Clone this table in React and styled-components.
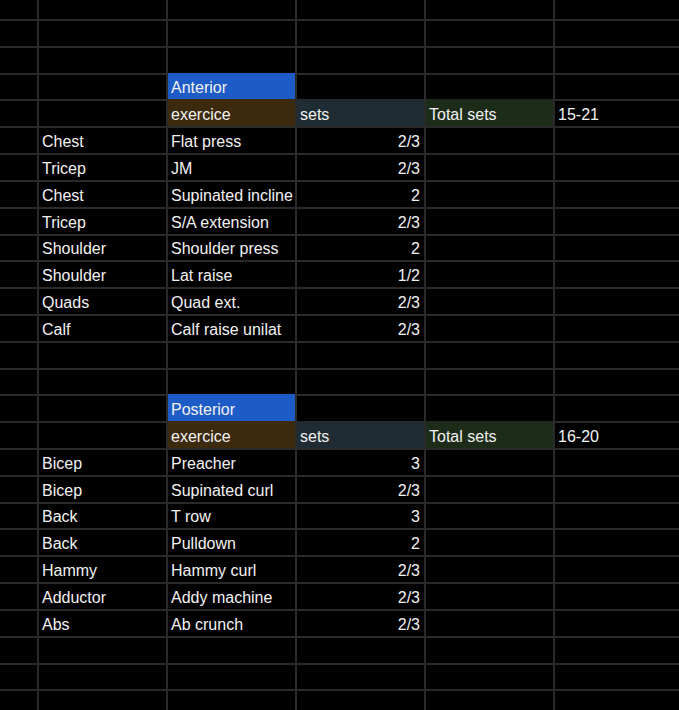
import React from 'react';
import styled, { createGlobalStyle } from 'styled-components';

const GlobalStyle = createGlobalStyle`
  html, body {
    margin: 0;
    padding: 0;
    background: #000;
  }
`;

const Viewport = styled.div`
  width: 100vw;
  height: 100vh;
  overflow: hidden;
  background: #000;
`;

const Grid = styled.div`
  display: grid;
  grid-template-columns: 37px repeat(5, 127px);
  grid-auto-rows: 24.82px;
  gap: 2px;
  margin-top: -5.82px;
  width: max-content;
  background: #2a2a2a;
  font-family: "Liberation Sans", Arial, sans-serif;
  font-size: 16px;
  color: #f2f2f2;
`;

const fills = {
  blue: '#1d5bc6',
  brown: '#3b2a0d',
  slate: '#202c33',
  green: '#1d2c19',
};

const Cell = styled.div`
  display: flex;
  align-items: flex-end;
  justify-content: ${(p) => (p.$right ? 'flex-end' : 'flex-start')};
  padding: 0 4px 2px 3px;
  background: ${(p) => (p.$fill ? fills[p.$fill] : '#000')};
  margin-top: ${(p) => (p.$fill ? '-2px' : '0')};
  white-space: nowrap;
  overflow: hidden;
  line-height: normal;
`;

const anterior = [
  ['Chest', 'Flat press', '2/3'],
  ['Tricep', 'JM', '2/3'],
  ['Chest', 'Supinated incline', '2'],
  ['Tricep', 'S/A extension', '2/3'],
  ['Shoulder', 'Shoulder press', '2'],
  ['Shoulder', 'Lat raise', '1/2'],
  ['Quads', 'Quad ext.', '2/3'],
  ['Calf', 'Calf raise unilat', '2/3'],
];

const posterior = [
  ['Bicep', 'Preacher', '3'],
  ['Bicep', 'Supinated curl', '2/3'],
  ['Back', 'T row', '3'],
  ['Back', 'Pulldown', '2'],
  ['Hammy', 'Hammy curl', '2/3'],
  ['Adductor', 'Addy machine', '2/3'],
  ['Abs', 'Ab crunch', '2/3'],
];

const EmptyRow = () => (
  <>
    {Array.from({ length: 6 }).map((_, i) => (
      <Cell key={i} />
    ))}
  </>
);

const Block = ({ title, range, rows }) => (
  <>
    <Cell />
    <Cell />
    <Cell $fill="blue">{title}</Cell>
    <Cell />
    <Cell />
    <Cell />

    <Cell />
    <Cell />
    <Cell $fill="brown">exercice</Cell>
    <Cell $fill="slate">sets</Cell>
    <Cell $fill="green">Total sets</Cell>
    <Cell>{range}</Cell>

    {rows.map(([muscle, exo, sets], i) => (
      <React.Fragment key={i}>
        <Cell />
        <Cell>{muscle}</Cell>
        <Cell>{exo}</Cell>
        <Cell $right>{sets}</Cell>
        <Cell />
        <Cell />
      </React.Fragment>
    ))}
  </>
);

const App = () => {
  return (
    <Viewport>
      <GlobalStyle />
      <Grid>
        <EmptyRow />
        <EmptyRow />
        <EmptyRow />
        <Block title="Anterior" range="15-21" rows={anterior} />
        <EmptyRow />
        <EmptyRow />
        <Block title="Posterior" range="16-20" rows={posterior} />
        <EmptyRow />
        <EmptyRow />
        <EmptyRow />
      </Grid>
    </Viewport>
  );
};

export default App;
